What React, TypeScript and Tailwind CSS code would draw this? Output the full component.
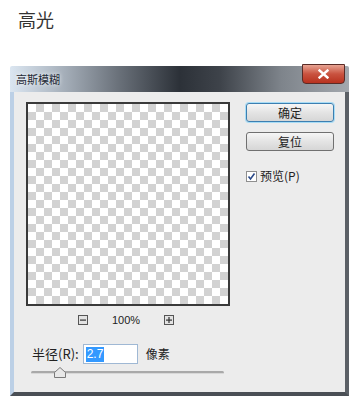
import React from 'react';

const cjk = { fontFamily: '"Noto Sans CJK SC", "Noto Sans", sans-serif' };

function ZoomBtn({ plus }: { plus?: boolean }) {
  return (
    <div className="w-[10px] h-[10px] border border-[#555] bg-[#e2e2e2] flex items-center justify-center">
      <svg width="6" height="6" viewBox="0 0 6 6">
        <rect x="0" y="2.5" width="6" height="1.2" fill="#333" />
        {plus && <rect x="2.4" y="0" width="1.2" height="6" fill="#333" />}
      </svg>
    </div>
  );
}

function Button({ label, primary }: { label: string; primary?: boolean }) {
  return (
    <div
      className={
        'w-[88px] h-[19px] rounded-[3px] flex items-center justify-center text-[12px] text-[#222] bg-[linear-gradient(#f6f6f6,#e4e4e4_50%,#d6d6d6)] ' +
        (primary ? 'border border-[#3c7fb1] shadow-[0_0_0_1px_#a8dcf5]' : 'border border-[#707070]')
      }
    >
      {label}
    </div>
  );
}

export default function App() {
  return (
    <div className="w-[361px] h-[405px] bg-white relative overflow-hidden" style={cjk}>
      <div className="pl-[18px] pt-[7px] text-[18px] leading-[24px] text-[#333]">高光</div>

      {/* dialog */}
      <div className="ml-[10px] mt-[35px] w-[339px] flex flex-col">
        {/* title bar */}
        <div className="relative h-[26px] bg-[linear-gradient(to_right,#dbe6f1_0%,#b4bec9_12%,#6a717a_32%,#2c3138_50%,#3e434a_62%,#7e848b_80%,#a3a8ae_100%)] rounded-t-[2px] flex items-center">
          <span className="pl-[6px] text-[11px] text-[#1f2a36] [text-shadow:0_0_4px_#fff]">高斯模糊</span>
          <div className="absolute right-[4px] -top-[2px] w-[43px] h-[20px] rounded-b-[4px] border border-[#5a2b26] bg-[linear-gradient(#e8a493,#c9523f_50%,#b8321f)] flex items-center justify-center">
            <svg width="11" height="10" viewBox="0 0 11 10">
              <path d="M1.5 1.5 L9.5 8.5 M9.5 1.5 L1.5 8.5" stroke="#fff" strokeWidth="2.4" strokeLinecap="square" />
            </svg>
          </div>
        </div>

        {/* body */}
        <div className="h-[304px] border-l-[4px] border-l-[#bcd0e6] border-r-[4px] border-r-[#5b6066] border-b-[4px] border-b-[#4a4f55] bg-[#ececec] flex pt-[10px] pl-[12px]">
          <div className="flex flex-col w-[204px]">
            <div className="w-[204px] h-[204px] border-2 border-[#3a3a3a] bg-[conic-gradient(#d2d2d2_25%,#ffffff_0_50%,#d2d2d2_0_75%,#ffffff_0)] bg-[length:16px_16px]" />
            <div className="flex items-center mt-[8px] h-[12px] pl-[52px] gap-[24px] text-[11px] text-[#222]" style={{ fontFamily: '"Liberation Sans", sans-serif' }}>
              <ZoomBtn />
              <span>100%</span>
              <ZoomBtn plus />
            </div>
            <div className="flex items-center mt-[18px] pl-[6px] h-[20px] text-[13px] text-[#222]">
              <span>半径(R):</span>
              <div className="ml-[4px] w-[55px] h-[20px] bg-white border border-[#9fb8d4] flex items-center pl-[2px]">
                <span className="bg-[#3399ff] text-white text-[12px] leading-[15px] px-[1px]" style={{ fontFamily: '"Liberation Sans", sans-serif' }}>2.7</span>
              </div>
              <span className="ml-[8px] text-[12px]">像素</span>
            </div>
            <div className="relative mt-[3px] ml-[5px] w-[193px] h-[10px] flex items-center">
              <div className="w-full h-[3px] rounded-full bg-[#a9a9a9] border-b border-b-[#d8d8d8]" />
              <svg className="absolute left-[23px] top-0" width="12" height="11" viewBox="0 0 12 11">
                <path d="M6 0.5 L11.5 5.5 L11.5 10.5 L0.5 10.5 L0.5 5.5 Z" fill="#e8e8e8" stroke="#7a7a7a" strokeWidth="1" />
              </svg>
            </div>
          </div>

          <div className="flex flex-col ml-[16px] pt-[1px] text-[12px]">
            <Button label="确定" primary />
            <div className="h-[10px]" />
            <Button label="复位" />
            <div className="flex items-center mt-[16px] gap-[3px] text-[#222]">
              <div className="w-[11px] h-[11px] border border-[#8f8f8f] bg-white flex items-center justify-center">
                <svg width="9" height="9" viewBox="0 0 9 9">
                  <path d="M1.5 4.5 L3.5 7 L7.5 1.5" stroke="#2b4a8a" strokeWidth="1.6" fill="none" />
                </svg>
              </div>
              <span>预览(P)</span>
            </div>
          </div>
        </div>
      </div>
    </div>
  );
}
